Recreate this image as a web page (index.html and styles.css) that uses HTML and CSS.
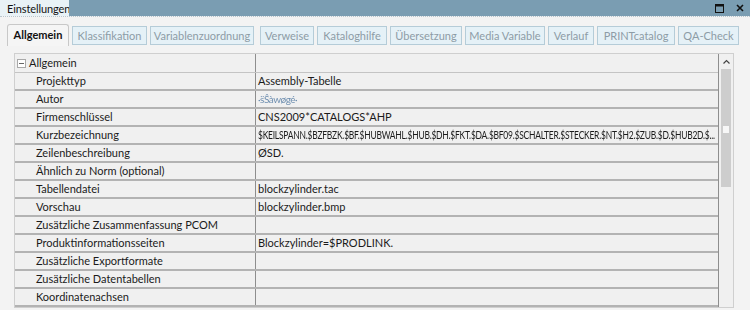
FILE: index.html
```html
<!DOCTYPE html>
<html>
<head>
    <title>Einstellungen</title>
    <link rel="stylesheet" href="styles.css">
</head>
<body>
    <div class="titlebar">
        <div class="title-tab">Einstellungen</div>
        <div class="title-fill">
            <span class="win-btn"><svg width="9" height="9" viewBox="0 0 9 9"><rect x="0.5" y="0.5" width="8" height="8" fill="none" stroke="#111" stroke-width="1"/><rect x="0.5" y="0.5" width="8" height="2" fill="#111"/></svg></span>
            <span class="win-btn"><svg width="8" height="8" viewBox="0 0 8 8"><path d="M1 1L7 7M7 1L1 7" stroke="#111" stroke-width="1.6"/></svg></span>
        </div>
    </div>

    <div class="content">
        <div class="tabs">
            <div class="tab active">Allgemein</div>
            <div class="tab" style="width: 75px">Klassifikation</div>
            <div class="tab" style="width: 104px">Variablenzuordnung</div>
            <div class="tab gap" style="width: 54px">Verweise</div>
            <div class="tab" style="width: 70px">Kataloghilfe</div>
            <div class="tab" style="width: 72px">Übersetzung</div>
            <div class="tab" style="width: 80px">Media Variable</div>
            <div class="tab" style="width: 46px">Verlauf</div>
            <div class="tab" style="width: 78px">PRINTcatalog</div>
            <div class="tab" style="width: 61px">QA-Check</div>
        </div>

        <div class="panel">
            <div class="grid">
                <div class="row head">
                    <div class="cell name"><span class="toggle"></span>Allgemein</div>
                    <div class="cell value"></div>
                </div>
                <div class="row">
                    <div class="cell name">Projekttyp</div>
                    <div class="cell value">Assembly-Tabelle</div>
                </div>
                <div class="row">
                    <div class="cell name">Autor</div>
                    <div class="cell value"><span class="blur">·s̈Ŝàwøgé·</span></div>
                </div>
                <div class="row">
                    <div class="cell name">Firmenschlüssel</div>
                    <div class="cell value">CNS2009*CATALOGS*AHP</div>
                </div>
                <div class="row">
                    <div class="cell name">Kurzbezeichnung</div>
                    <div class="cell value"><span class="squeeze">$KEILSPANN.$BZFBZK.$BF.$HUBWAHL.$HUB.$DH.$FKT.$DA.$BF09.$SCHALTER.$STECKER.$NT.$H2.$ZUB.$D.$HUB2D.$...</span></div>
                </div>
                <div class="row">
                    <div class="cell name">Zeilenbeschreibung</div>
                    <div class="cell value">ØSD.</div>
                </div>
                <div class="row">
                    <div class="cell name">Ähnlich zu Norm (optional)</div>
                    <div class="cell value"></div>
                </div>
                <div class="row">
                    <div class="cell name">Tabellendatei</div>
                    <div class="cell value">blockzylinder.tac</div>
                </div>
                <div class="row">
                    <div class="cell name">Vorschau</div>
                    <div class="cell value">blockzylinder.bmp</div>
                </div>
                <div class="row">
                    <div class="cell name">Zusätzliche Zusammenfassung PCOM</div>
                    <div class="cell value"></div>
                </div>
                <div class="row">
                    <div class="cell name">Produktinformationsseiten</div>
                    <div class="cell value">Blockzylinder=$PRODLINK.</div>
                </div>
                <div class="row">
                    <div class="cell name">Zusätzliche Exportformate</div>
                    <div class="cell value"></div>
                </div>
                <div class="row">
                    <div class="cell name">Zusätzliche Datentabellen</div>
                    <div class="cell value"></div>
                </div>
                <div class="row">
                    <div class="cell name">Koordinatenachsen</div>
                    <div class="cell value"></div>
                </div>
            </div>
            <div class="scrollbar">
                <div class="arrow"><svg width="7" height="5" viewBox="0 0 7 5"><path d="M0.5 4.5L3.5 1.5L6.5 4.5" fill="none" stroke="#444" stroke-width="1.2"/></svg></div>
                <div class="thumb"><span class="grip"></span></div>
            </div>
        </div>
    </div>
</body>
</html>
```

FILE: styles.css
```css
* {
    box-sizing: border-box;
}

body {
    margin: 0;
    width: 750px;
    height: 310px;
    overflow: hidden;
    background: #f3f3f3;
    font-family: Lato, "Noto Sans", sans-serif;
    font-size: 11px;
    color: #1b1b1b;
}

/* Titelleiste */
.titlebar {
    display: flex;
    height: 17px;
    border-bottom: 1px dotted #b9c7cf;
}

.title-tab {
    width: 69px;
    padding-left: 7px;
    line-height: 17px;
    background: #e9f2f6;
    color: #111;
    white-space: nowrap;
    letter-spacing: -0.1px;
}

.title-fill {
    flex: 1;
    display: flex;
    justify-content: flex-end;
    align-items: center;
    gap: 12px;
    padding-right: 6px;
    background: #7a9db2;
}

.win-btn {
    display: flex;
}

/* Reiter */
.tabs {
    display: flex;
    align-items: flex-end;
    gap: 3px;
    height: 22px;
    padding-left: 7px;
    margin-top: 7px;
}

.tab {
    height: 19px;
    line-height: 17px;
    text-align: center;
    background: #e5f1f7;
    border: 1px solid #b5ccd8;
    color: #8d9ca6;
    margin-bottom: 1px;
    white-space: nowrap;
}

.tab.gap {
    margin-left: 3px;
}

.tab.active {
    width: 62px;
    height: 22px;
    line-height: 20px;
    margin-bottom: 0;
    background: #f5f5f5;
    border: 1px solid #c8c8c8;
    border-bottom: none;
    border-radius: 3px 3px 0 0;
    font-weight: bold;
    color: #111;
}

/* Eigenschaftstabelle */
.panel {
    display: flex;
    margin: 7px 16px 0 14px;
    border: 1px solid #cfcfcf;
    background: #f0f0f0;
}

.grid {
    flex: 1;
    min-width: 0;
    border-right: 1px solid #8e8e8e;
}

.row {
    display: grid;
    grid-template-columns: 240px 1fr;
    height: 18px;
    border-bottom: 2px solid #b3b3b3;
}

.row.head {
    height: 19px;
    border-bottom-width: 1px;
    border-bottom-color: #c4c4c4;
}

.cell {
    line-height: 16px;
    white-space: nowrap;
    overflow: hidden;
}

.name {
    padding-left: 21px;
}

.head .name {
    padding-left: 2px;
    display: flex;
    align-items: center;
    line-height: 18px;
}

.value {
    border-left: 1px solid #8e8e8e;
    padding-left: 2px;
    padding-right: 3px;
}

.squeeze {
    display: inline-block;
    letter-spacing: -0.3px;
    transform: scaleX(0.77);
    transform-origin: left center;
}

.toggle {
    position: relative;
    width: 9px;
    height: 9px;
    margin-right: 3px;
    border: 1px solid #a9a9a9;
    background: #fff;
}

.toggle::after {
    content: "";
    position: absolute;
    left: 1px;
    top: 3px;
    width: 5px;
    height: 1px;
    background: #666;
}

.blur {
    color: #6f8fb0;
    filter: blur(0.6px);
    font-size: 10px;
    letter-spacing: -0.5px;
}

/* Bildlaufleiste */
.scrollbar {
    width: 14px;
    display: flex;
    flex-direction: column;
    align-items: center;
}

.arrow {
    height: 15px;
    display: flex;
    align-items: center;
}

.thumb {
    width: 10px;
    height: 118px;
    background: #cdcdcd;
    display: flex;
    justify-content: center;
    padding-top: 57px;
}

.grip {
    width: 6px;
    height: 7px;
    background: #f7f7f7;
}
```
